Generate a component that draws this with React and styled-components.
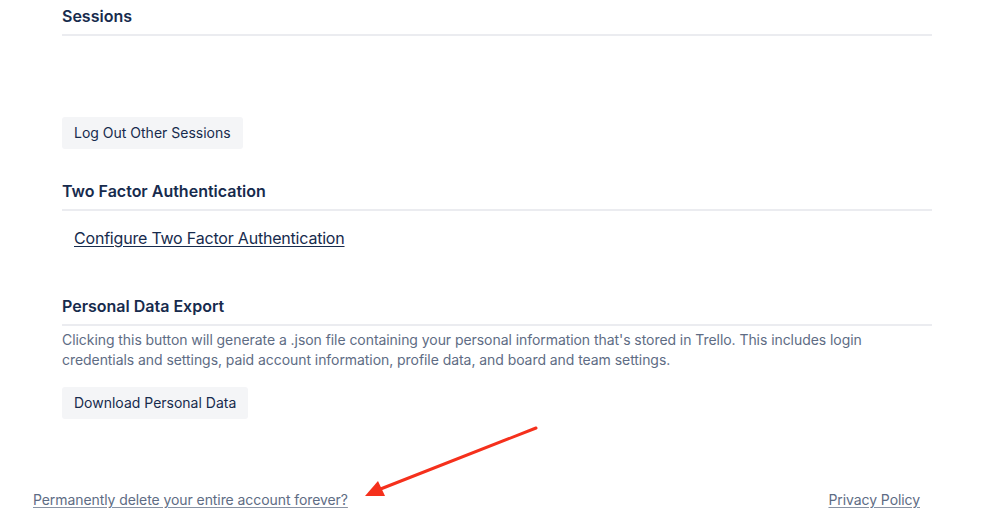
import React from "react";
import styled, { createGlobalStyle } from "styled-components";

const Global = createGlobalStyle`
  html, body { margin: 0; padding: 0; background: #fff; }
  body {
    font-family: Inter, "Liberation Sans", Arial, sans-serif;
    color: #172b4d;
    -webkit-font-smoothing: antialiased;
  }
`;

const Page = styled.div`
  position: relative;
  width: 999px;
  height: 515px;
  overflow: hidden;
`;

const Content = styled.div`
  width: 870px;
  margin-left: 62px;
  padding-top: 6px;
  display: flex;
  flex-direction: column;
`;

const Heading = styled.h3`
  margin: ${(p) => p.$top || 0}px 0 0;
  font-size: 16px;
  line-height: 20px;
  font-weight: 600;
  color: #172b4d;
  padding-bottom: 8px;
  border-bottom: 2px solid #ebecf0;
`;

const SessionList = styled.div`
  height: 81px;
`;

const Button = styled.button`
  align-self: flex-start;
  margin-top: ${(p) => p.$top || 0}px;
  height: 32px;
  padding: 0 12px;
  border: none;
  border-radius: 3px;
  background: #f4f5f7;
  color: #172b4d;
  font-family: inherit;
  font-size: 14px;
  line-height: 20px;
  cursor: pointer;
`;

const TextLink = styled.a`
  align-self: flex-start;
  margin: 15px 0 0 12px;
  font-size: 16px;
  line-height: 24px;
  letter-spacing: -0.2px;
  color: #172b4d;
  text-decoration: underline;
  text-underline-offset: 2px;
`;

const Paragraph = styled.p`
  margin: 4px 0 0;
  font-size: 14px;
  line-height: 20px;
  letter-spacing: -0.06px;
  color: #5e6c84;
`;

const Footer = styled.div`
  display: flex;
  justify-content: space-between;
  padding: 0 79px 0 33px;
  margin-top: 71px;
`;

const FooterLink = styled.a`
  font-size: 14px;
  line-height: 20px;
  letter-spacing: -0.08px;
  color: #5e6c84;
  text-decoration: underline;
  text-underline-offset: 2px;
  text-decoration-color: #8993a4;
`;

const Arrow = styled.svg`
  position: absolute;
  left: 0;
  top: 0;
  pointer-events: none;
`;

export default function App() {
  return (
    <Page>
      <Global />
      <Content>
        <Heading>Sessions</Heading>
        <SessionList />
        <Button>Log Out Other Sessions</Button>

        <Heading $top={32}>Two Factor Authentication</Heading>
        <TextLink href="#">Configure Two Factor Authentication</TextLink>

        <Heading $top={46}>Personal Data Export</Heading>
        <Paragraph>
          Clicking this button will generate a .json file containing your personal information that's stored in Trello. This includes login
          <br />
          credentials and settings, paid account information, profile data, and board and team settings.
        </Paragraph>
        <Button $top={17}>Download Personal Data</Button>
      </Content>
      <Footer>
        <FooterLink href="#">Permanently delete your entire account forever?</FooterLink>
        <FooterLink href="#">Privacy Policy</FooterLink>
      </Footer>
      <Arrow width="999" height="515" viewBox="0 0 999 515">
        <line x1="536" y1="428" x2="378" y2="490" stroke="#f5301c" strokeWidth="3" strokeLinecap="round" />
        <polygon points="365,496 378,481 385,496" fill="#f5301c" />
      </Arrow>
    </Page>
  );
}
